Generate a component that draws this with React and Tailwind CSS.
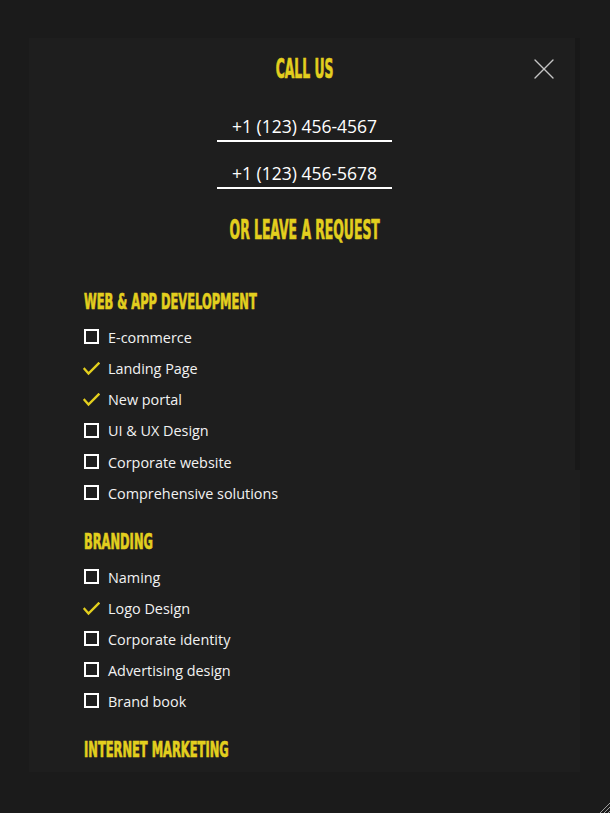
import { X } from 'lucide-react';

const sections = [
  {
    title: 'Web & App Development',
    items: [
      { label: 'E-commerce', checked: false },
      { label: 'Landing Page', checked: true },
      { label: 'New portal', checked: true },
      { label: 'UI & UX Design', checked: false },
      { label: 'Corporate website', checked: false },
      { label: 'Comprehensive solutions', checked: false },
    ],
  },
  {
    title: 'Branding',
    items: [
      { label: 'Naming', checked: false },
      { label: 'Logo Design', checked: true },
      { label: 'Corporate identity', checked: false },
      { label: 'Advertising design', checked: false },
      { label: 'Brand book', checked: false },
    ],
  },
  {
    title: 'Internet Marketing',
    items: [],
  },
];

const headingFont =
  "font-['DejaVu_Sans_Condensed','Liberation_Sans',sans-serif] font-bold uppercase text-[#e3cf1e] leading-none inline-block [-webkit-text-stroke:0.7px_#e3cf1e]";

const Checkbox = ({ checked }) =>
  checked ? (
    <svg width="17" height="14" viewBox="0 0 17 14" className="shrink-0 -ml-[1px]">
      <polyline
        points="1.5,7 5.5,11.5 15.5,1.5"
        fill="none"
        stroke="#e3cf1e"
        strokeWidth="2.4"
        strokeLinecap="square"
      />
    </svg>
  ) : (
    <span className="block w-[15px] h-[15px] border-2 border-white shrink-0 -mt-[3px]" />
  );

const PhoneField = ({ value, className = '' }) => (
  <div className={`w-[175px] h-[28px] border-b-2 border-white flex items-center justify-center ${className}`}>
    <span className="text-[17.5px] text-white leading-none">{value}</span>
  </div>
);

export default function App() {
  return (
    <div className="min-h-[813px] bg-[#1b1b1b] font-['Open_Sans',sans-serif] relative overflow-hidden">
      <div className="pt-[38px] pl-[29px]">
        <div className="relative w-[551px] h-[734px] bg-[#1e1e1e] overflow-hidden">
          {/* scrollbar thumb */}
          <div className="absolute right-0 top-0 w-[5px] h-[432px] bg-[#181818]" />

          <button className="absolute right-[18px] top-[13px] w-[36px] h-[36px] flex items-center justify-center text-[#c4c4c4]">
            <X className="w-[36px] h-[36px]" strokeWidth={0.9} />
          </button>

          <div className="flex flex-col items-center pt-[19px]">
            <div className="h-[24px] flex items-center">
              <span className={`${headingFont} text-[26px] scale-x-[0.53]`}>Call us</span>
            </div>
            <PhoneField value="+1 (123) 456-4567" className="mt-[33px]" />
            <PhoneField value="+1 (123) 456-5678" className="mt-[19px]" />
            <div className="h-[24px] flex items-center mt-[29px]">
              <span className={`${headingFont} text-[26px] scale-x-[0.53]`}>Or leave a request</span>
            </div>
          </div>

          <div className="pl-[55px] pt-[48px]">
            {sections.map((section, i) => (
              <div key={section.title} className={i > 0 ? 'mt-[20px]' : ''}>
                <div className="h-[24px] flex items-center">
                  <span className={`${headingFont} text-[22px] origin-left scale-x-[0.58]`}>
                    {section.title}
                  </span>
                </div>
                {section.items.length > 0 && (
                  <ul className="mt-[8.5px]">
                    {section.items.map((item) => (
                      <li key={item.label} className="h-[31.2px] flex items-center gap-[8px]">
                        <span className="w-[16px] flex items-center">
                          <Checkbox checked={item.checked} />
                        </span>
                        <span className="text-[14.4px] text-[#f2f2f2] leading-none">{item.label}</span>
                      </li>
                    ))}
                  </ul>
                )}
              </div>
            ))}
          </div>
        </div>
      </div>

      {/* resize grip */}
      <svg width="12" height="12" viewBox="0 0 12 12" className="absolute right-0 bottom-0">
        <line x1="2" y1="12" x2="12" y2="2" stroke="#9a9a9a" strokeWidth="1" />
        <line x1="6" y1="12" x2="12" y2="6" stroke="#9a9a9a" strokeWidth="1" />
        <line x1="10" y1="12" x2="12" y2="10" stroke="#9a9a9a" strokeWidth="1" />
      </svg>
    </div>
  );
}
